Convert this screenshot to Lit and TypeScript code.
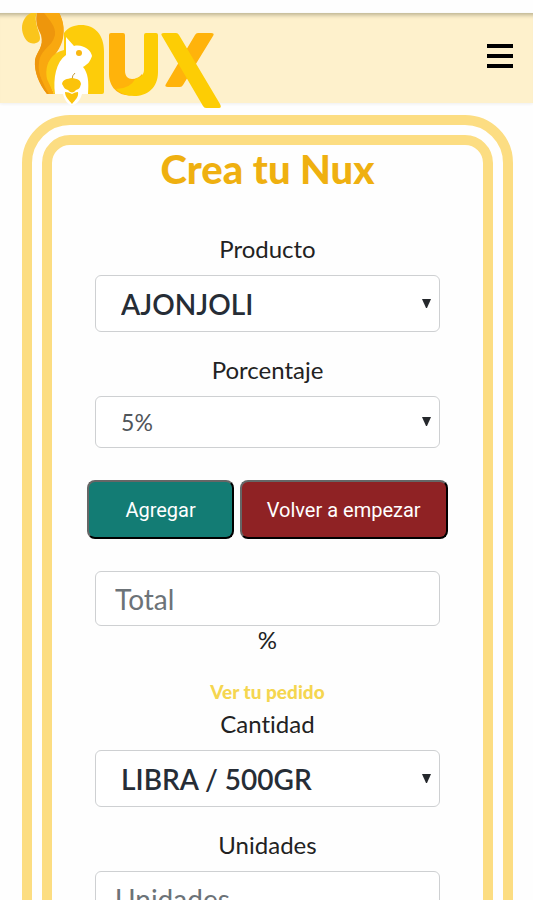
import { LitElement, html, css, svg } from "lit";
import { customElement, property } from "lit/decorators.js";

@customElement("nux-logo")
class NuxLogo extends LitElement {
  static styles = css`
    :host { display: block; }
    .logo { display: block; width: 200px; height: 96px; }
  `;

  render() {
    return html`
      <svg class="logo" viewBox="0 0 200 96" role="img" aria-label="Nux">
        ${svg`
        <path fill="#fdcc0a" d="M42 82V20C46 14 53 12 59 12C73 12 82 22 82 38V79Q82 81 80 81H54Z"/>
        <path fill="#f9a80f" d="M16 0H37C42 8 43 20 40 29C37 39 28 46 26 56C25 66 30 75 32 81H25C18 71 12 60 13 47C15 38 22 34 20 22Z"/>
        <path fill="#ee960c" d="M15 0H37C41 6 40 17 34 25C27 34 18 38 17 50C17 62 21 71 27 81H25C17 71 12 59 13 47C15 38 22 34 19 22C15 14 13 8 15 0Z"/>
        <path fill="#f9a80f" d="M22 0H37C42 8 43 20 39 29C33 39 23 43 20 54C20 66 26 73 30 81C22 73 15 61 17 50C19 38 30 34 33 22C34 13 28 8 22 0Z"/>
        <path fill="#fac51c" d="M15 0C12 5 15 13 17 20C19 26 18 29 14 30C5 33 0 22 0 15C0 8 4 2 9 0Z"/>
        <path fill="#fccb13" d="M42 37C29 40 22 52 25 66L32 81H42V50Z"/>
        <path fill="#fff" d="M44 24L52 33C61 31 69 37 70 43C68 49 66 51 61 54C66 60 67 68 66 81H60C58 88 54 92 50 92C46 92 43 88 41 81H33C31 65 34 49 44 42Z"/>
        <circle cx="57" cy="40" r="3" fill="#f9b711"/>
        <path fill="none" stroke="#c39a3a" stroke-width="1" d="M53 60Q50 62 50 67"/>
        <path fill="#fbc30b" d="M40 71C41 66 45 66 50 65C55 66 58 66 59 71C58 74 58 76 54 77Q50 82 46 77C42 76 42 74 40 71Z"/>
        <path fill="#fbc30b" d="M43 79Q47 79 50 81Q53 79 56 79C57 84 53 87 50 91C47 87 43 84 43 79Z"/>
        <path fill="#ffb30b" d="M89 20H101Q103 20 103 22V58C103 63 106 66 110 66C114 66 118 64 120 61L124 77C106 89 87 80 87 61V22Q87 20 89 20Z"/>
        <path fill="#fdcd04" d="M124 20H134Q136 20 136 22V59C136 75 125 83 112 83C104 83 98 80 94 76Q108 76 114 65C119 65 122 61 122 57V22Q122 20 124 20Z"/>
        <path fill="#ffb30b" d="M176 20H189Q193 20 191 23L161 72Q160 74 158 74H146Q142 74 144 71L173 22Q174 20 176 20Z"/>
        <path fill="#fdcd04" d="M142 20H154Q156 20 157 22L198 91Q200 95 197 95H184Q182 95 181 93L140 23Q138 20 142 20Z"/>
        `}
      </svg>
    `;
  }
}

@customElement("nux-select")
class NuxSelect extends LitElement {
  @property() label = "";
  @property() value = "";
  @property({ type: Boolean }) light = false;

  static styles = css`
    :host { display: block; }
    .label { display: block; text-align: center; line-height: 32px; margin-bottom: 10px; color: #222; }
    .wrap { position: relative; }
    .select {
      appearance: none;
      display: block;
      box-sizing: border-box;
      width: 100%;
      height: 57px;
      padding: 0 32px 0 25px;
      border: 1px solid #ced0d2;
      border-radius: 6px;
      background: #fff;
      color: #262d36;
      font: 600 28px Lato, sans-serif;
    }
    .select.light { height: 52px; font-size: 23px; font-weight: 400; color: #50555a; }
    .arrow {
      position: absolute;
      right: 9px;
      top: 50%;
      width: 9px;
      height: 9px;
      margin-top: -5px;
      fill: #25282c;
      pointer-events: none;
    }
  `;

  render() {
    return html`
      <label class="label" for="field">${this.label}</label>
      <div class="wrap">
        <select id="field" class="select ${this.light ? "light" : ""}">
          <option>${this.value}</option>
        </select>
        <svg class="arrow" viewBox="0 0 9 9" aria-hidden="true"><path d="M0 0H9L5 9H4Z" /></svg>
      </div>
    `;
  }
}

@customElement("app-root")
class AppRoot extends LitElement {
  static styles = css`
    :host {
      display: block;
      height: 100vh;
      overflow-y: auto;
      scrollbar-width: none;
      background: #fefefe;
      font: 24px/32px Lato, sans-serif;
      font-variant-ligatures: none;
      color: #222;
    }
    .bar {
      display: flex;
      justify-content: space-between;
      align-items: center;
      box-sizing: border-box;
      height: 90px;
      margin-top: 13px;
      padding: 0 20px 0 22px;
      background: #fef1cc;
      box-shadow: inset 0 6px 4px -4px #b9b08f, 0 1px 3px #eeeeee;
    }
    .home { align-self: flex-start; display: block; }
    .menu { display: block; padding: 0; border: 0; background: none; margin-bottom: 4px; }
    .menu-icon { display: block; width: 26px; height: 24px; }
    .card {
      margin: 12px 20px 40px 22px;
      border: 30px double #fcdd82;
      border-radius: 48px;
      background: #fefefe;
    }
    .title {
      margin: 0 0 40px;
      text-align: center;
      font-size: 40px;
      line-height: 48px;
      font-weight: 900;
      color: #efb010;
    }
    .form { display: flex; flex-direction: column; align-items: center; }
    .field { width: 80%; margin-bottom: 22px; }
    .actions { display: flex; gap: 6px; margin: 10px 0 32px; }
    .button {
      height: 59px;
      padding: 0 36px;
      border: 2px outset #000;
      border-color: #666 #111 #111 #666;
      border-radius: 8px;
      color: #fff;
      font: 20px Roboto, sans-serif;
      white-space: nowrap;
    }
    .add { background: #137c74; }
    .reset { background: #8f2224; padding: 0 25px; }
    .input {
      display: block;
      box-sizing: border-box;
      width: 100%;
      height: 55px;
      padding: 0 19px;
      border: 1px solid #ced0d2;
      border-radius: 6px;
      background: #fff;
      color: #262d36;
      font: 28px Lato, sans-serif;
    }
    .input::placeholder { color: #6c7378; opacity: 1; }
    .unit { display: block; text-align: center; line-height: 28px; }
    .order { font-size: 19px; font-weight: 900; color: #f5d650; text-decoration: none; }
    .label { display: block; text-align: center; margin-bottom: 10px; }
  `;

  render() {
    return html`
      <header class="bar">
        <a class="home" href="#" aria-label="Nux"><nux-logo></nux-logo></a>
        <button class="menu" aria-label="Menu">
          <svg class="menu-icon" viewBox="0 0 26 24" aria-hidden="true">
            <path d="M0 0H26V4H0ZM0 10H26V14H0ZM0 20H26V24H0Z" />
          </svg>
        </button>
      </header>
      <main class="card">
        <h1 class="title">Crea tu Nux</h1>
        <form class="form">
          <nux-select class="field" label="Producto" value="AJONJOLI"></nux-select>
          <nux-select class="field" label="Porcentaje" value="5%" light></nux-select>
          <div class="actions">
            <button type="button" class="button add">Agregar</button>
            <button type="button" class="button reset">Volver a empezar</button>
          </div>
          <div class="field">
            <input id="total" class="input" placeholder="Total" />
            <label class="unit" for="total">%</label>
          </div>
          <a class="order" href="#">Ver tu pedido</a>
          <nux-select class="field" label="Cantidad" value="LIBRA / 500GR"></nux-select>
          <div class="field">
            <label class="label" for="units">Unidades</label>
            <input id="units" class="input" placeholder="Unidades" />
          </div>
        </form>
      </main>
    `;
  }
}
